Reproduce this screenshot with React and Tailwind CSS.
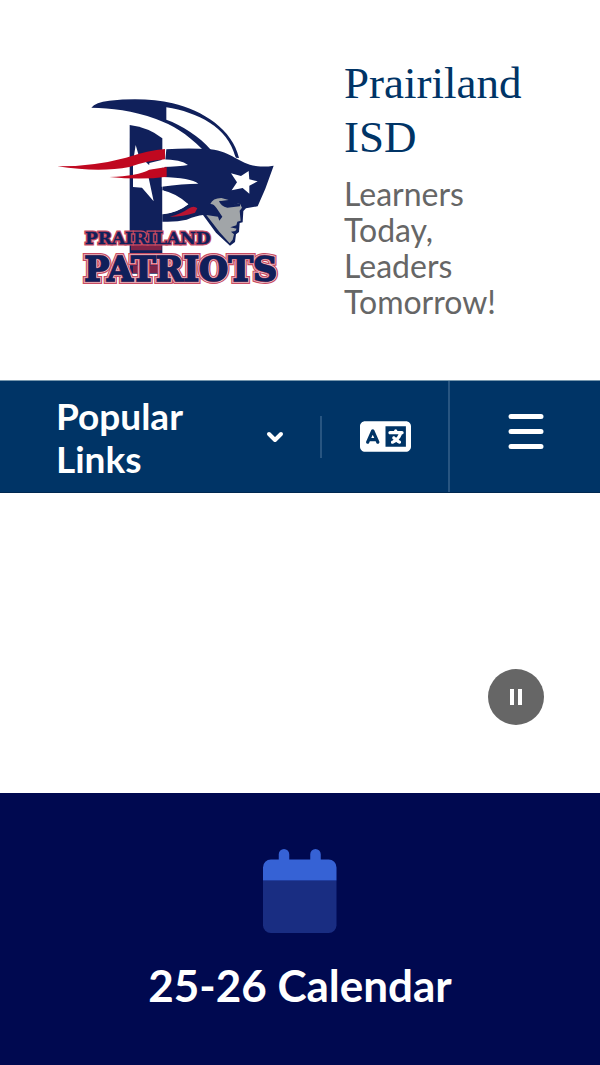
import { FaLanguage } from "react-icons/fa6";

function Logo() {
  return (
    <svg viewBox="0 -16 672 620" className="w-56 shrink-0" role="img" aria-label="Prairiland Patriots">
      {/* crest and plume */}
      <path fill="#10205b" d="M106 52Q118 36 160 31Q270 20 350 39C440 60 530 118 549 203L540 202C532 182 510 190 465 180L438 176C392 130 350 104 300 86C230 60 165 53 106 52Z" />
      <path fill="#fff" d="M331 51C425 66 515 110 538 199L465 179C430 138 378 105 331 88Z" />
      {/* stem with star */}
      <path fill="#10205b" d="M221 104Q280 112 319 144V550H221Z" />
      <path fill="#fff" d="M239 164L248 195L280 225L277 258L293 333L258 292L231 290V215ZM280 218L320 208V236L278 240Z" />
      {/* helmet */}
      <path fill="#10205b" d="M331 177Q400 172 463 177C530 185 550 222 605 228Q630 230 653 226L628 295L605 348L570 354L562 362L560 396L551 398L549 425L540 432L537 455L522 466L480 427L441 374Q422 376 392 388Q360 396 319 394V372Q365 368 397 342Q362 309 319 300Z" />
      <path fill="#fff" d="M317 207Q376 208 396 224Q370 228 317 230ZM317 260Q405 262 427 280Q380 280 317 289ZM320 300Q362 318 397 342Q360 368 320 372Z" />
      <path fill="#fff" d="M525 249L555 257L578 242L580 267L605 273L580 286L580 310L560 293L527 300L543 276Z" />
      {/* red streaks */}
      <path fill="#c00820" d="M4 228Q115 228 210 202Q278 180 327 176V207Q275 211 220 230Q130 247 4 228Z" />
      <path fill="#c00820" d="M160 260Q246 257 280 238L332 230V259Q258 270 160 260Z" />
      <path fill="#b81432" d="M341 379Q375 371 397 355Q414 344 424 354L417 367Q382 379 341 379Z" />
      {/* face */}
      <path fill="#a1a5a8" d="M463 341Q470 323 496 323L518 329L492 333L507 345Q526 349 551 338L558 352L551 361L554 391L544 394L541 405L523 411L542 415L538 422L525 424L534 432L530 448L521 459L491 426L451 374L486 379L490 391L499 379L482 354Q473 340 463 341Z" />
      <path fill="#10205b" d="M489 332L520 331Q518 341 536 342L552 338V348L514 352Q494 348 489 332Z" />
      {/* wordmark */}
      <path fill="#7e2448" d="M225 464H317V480H225ZM231 526H317V548H231Z" />
      <g fontFamily="'DejaVu Serif', serif" fontWeight="bold" strokeLinejoin="miter">
        <g fill="#c84b61" stroke="#c84b61">
          <text x="87" y="460" fontSize="51" strokeWidth="9">PRAIRILAND</text>
          <text x="85" y="572" fontSize="100" strokeWidth="18">PATRIOTS</text>
        </g>
        <text x="85" y="572" fontSize="100" fill="#eed6dd" stroke="#eed6dd" strokeWidth="11">PATRIOTS</text>
        <text x="85" y="572" fontSize="100" fill="#c84b61" stroke="#c84b61" strokeWidth="7">PATRIOTS</text>
        <g fill="#10205b" stroke="#10205b">
          <text x="87" y="460" fontSize="51" strokeWidth="1">PRAIRILAND</text>
          <text x="85" y="572" fontSize="100" strokeWidth="4">PATRIOTS</text>
        </g>
      </g>
    </svg>
  );
}

function CalendarIcon() {
  return (
    <svg viewBox="0 0 448 512" className="h-21" aria-hidden="true">
      <path fill="#192d82" d="M0 192h448v272a48 48 0 0 1-48 48H48a48 48 0 0 1-48-48z" />
      <path fill="#3662d5" d="M96 32a32 32 0 0 1 64 0v32h128V32a32 32 0 0 1 64 0v32h48a48 48 0 0 1 48 48v80H0v-80a48 48 0 0 1 48-48h48z" />
    </svg>
  );
}

export default function App() {
  return (
    <div className="flex min-h-screen flex-col bg-white font-['Lato',sans-serif]">
      <header className="flex items-center gap-16 px-14 pt-14 pb-15">
        <Logo />
        <div className="flex flex-1 flex-col gap-3">
          <h1 className="font-['Liberation_Serif',serif] text-[45px] leading-[54px] text-[#003466]">Prairiland ISD</h1>
          <p className="text-[32px] leading-9 text-[#666]">Learners Today, Leaders Tomorrow!</p>
        </div>
      </header>

      <nav className="flex h-[113px] items-stretch border-y border-t-[#7797ad] border-b-[#002850] bg-[#003466] text-white">
        <div className="flex flex-1 items-center pl-14">
          <button type="button" className="flex flex-1 items-center justify-between pr-9 text-left text-[37px] leading-[43px] font-bold">
            <span className="w-40">Popular Links</span>
            <svg viewBox="0 0 18 12" className="w-[18px]" fill="none" stroke="currentColor" strokeWidth="4" strokeLinecap="round" strokeLinejoin="round" aria-hidden="true">
              <path d="M3 3l6 6 6-6" />
            </svg>
          </button>
          <button type="button" aria-label="Translate" className="flex h-[42px] items-center border-l-2 border-[#285581] pr-[37px] pl-[38px]">
            <FaLanguage size={51} />
          </button>
        </div>
        <button type="button" aria-label="Menu" className="flex w-38 items-start justify-end border-l-2 border-[#285581] pt-8 pr-14">
          <svg viewBox="0 0 36 37" className="w-9" stroke="currentColor" strokeWidth="5" strokeLinecap="round" aria-hidden="true">
            <path d="M3 3.500h30M3 18.500h30M3 33.500h30" />
          </svg>
        </button>
      </nav>

      <section className="flex h-75 items-end justify-end px-14 pb-17" aria-label="Slideshow">
        <button type="button" aria-label="Pause" className="flex size-14 items-center justify-center rounded-full bg-[#666] text-white">
          <svg viewBox="0 0 14 16" className="w-3.5" fill="currentColor" aria-hidden="true">
            <path d="M1 0h4v16H1zM9 0h4v16H9z" />
          </svg>
        </button>
      </section>

      <section className="flex-1 bg-[#000950] py-14">
        <a href="#calendar" className="flex flex-col items-center gap-6 text-[44px] leading-14 font-bold text-white">
          <CalendarIcon />
          <span>25-26 Calendar</span>
        </a>
      </section>
    </div>
  );
}
